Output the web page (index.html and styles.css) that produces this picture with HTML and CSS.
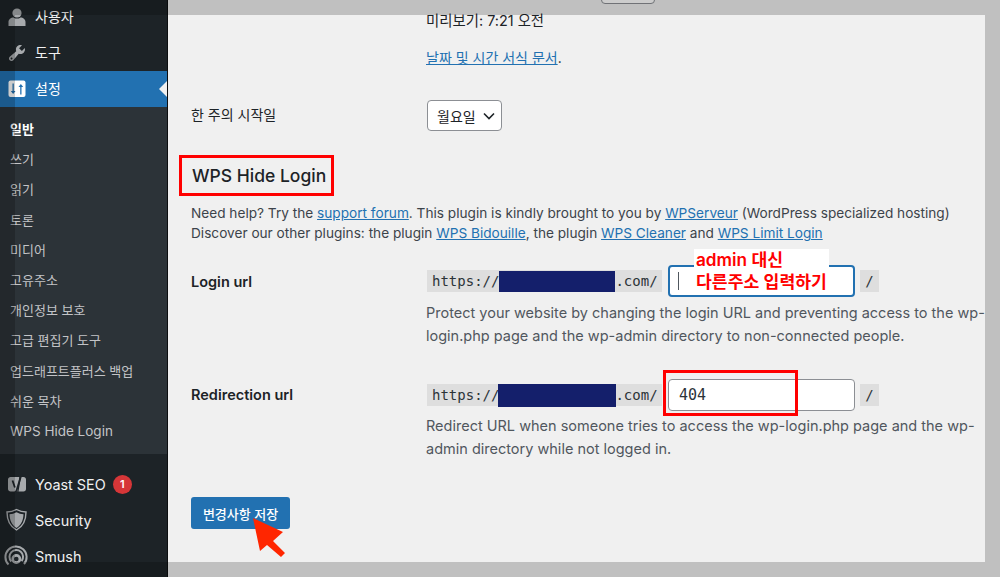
FILE: index.html
```html
<!DOCTYPE html>
<html lang="ko">

<head>
    <meta charset="UTF-8">
    <meta name="viewport" content="width=device-width, initial-scale=1.0">
    <title>일반 설정</title>
    <link rel="stylesheet" href="styles.css">
</head>

<body>
    <div class="app">
        <aside class="sidebar">
            <a class="menu-item menu-first">
                <svg class="menu-icon" viewBox="0 0 20 20"><circle cx="10" cy="6" r="4.6"/><path d="M1.5 19v-4c0-2.8 2.4-4.6 5-4.6 1 .8 2.2 1.2 3.5 1.2s2.500-.4 3.500-1.200c2.600 0 5 1.800 5 4.600v4z"/></svg>
                <span class="menu-label">사용자</span>
            </a>
            <a class="menu-item">
                <svg class="menu-icon" viewBox="0 0 20 20"><path d="M16.68 9.77c-1.34 1.34-3.3 1.67-4.95.99l-5.41 6.52c-.99.99-2.59.99-3.58 0s-.99-2.59 0-3.58l6.52-5.41c-.68-1.65-.35-3.61.99-4.95 1.28-1.28 3.12-1.62 4.72-1.06l-2.89 2.89 2.82 2.82 2.86-2.87c.53 1.58.18 3.39-1.08 4.65zM3.81 16.21c.4.39 1.04.39 1.43 0 .4-.4.4-1.04 0-1.43-.39-.4-1.03-.4-1.43 0-.39.39-.39 1.03 0 1.43z"/></svg>
                <span class="menu-label">도구</span>
            </a>
            <a class="menu-item menu-current">
                <svg class="menu-icon" viewBox="0 0 20 20"><rect x="1.500" y="1.500" width="17" height="16.500" rx="2" fill="#fff"/><path class="settings-arrows" d="M5.500 4.500h1.300v7.500h1.700l-2.350 3-2.350-3h1.700zM13.200 15.500h1.300V8h1.700l-2.350-3-2.350 3h1.700z"/></svg>
                <span class="menu-label">설정</span>
            </a>
            <nav class="submenu">
                <a class="submenu-item submenu-current">일반</a>
                <a class="submenu-item">쓰기</a>
                <a class="submenu-item">읽기</a>
                <a class="submenu-item">토론</a>
                <a class="submenu-item">미디어</a>
                <a class="submenu-item">고유주소</a>
                <a class="submenu-item">개인정보 보호</a>
                <a class="submenu-item">고급 편집기 도구</a>
                <a class="submenu-item">업드래프트플러스 백업</a>
                <a class="submenu-item">쉬운 목차</a>
                <a class="submenu-item submenu-latin">WPS Hide Login</a>
            </nav>
            <a class="menu-item menu-after">
                <svg class="menu-icon" viewBox="0 0 20 20"><path d="M3.500 3h8.800l-2 14.500H3.500C2.300 17.500 1 16.500 1 15V5.500C1 4 2.300 3 3.500 3zM14 3h2.500C18 3 19 4 19 5.500V15c0 1.500-1 2.500-2.500 2.500h-5z"/><path class="yoast-y" d="M5.500 6.500l2.400 7M14.500 .5L9.500 16.500c-.4 1.300-1.400 2.500-3.500 3"/></svg>
                <span class="menu-label menu-latin">Yoast SEO</span>
                <span class="badge">1</span>
            </a>
            <a class="menu-item">
                <svg class="menu-icon menu-icon-wide" viewBox="0 0 24 24"><path class="shield-line" d="M12.500 1.500c3.100 1.700 6.200 2.500 9.500 2.500 0 7.500-2 14-9.500 18C5 18 3 11.500 3 4c3.300 0 6.400-.8 9.500-2.500z"/><path d="M12.500 4.200c2.300 1.200 4.600 1.900 7 2.100-.2 5.500-2 10.500-7 13.700-5-3.200-6.800-8.200-7-13.700 2.400-.2 4.700-.9 7-2.100z"/></svg>
                <span class="menu-label menu-latin">Security</span>
            </a>
            <a class="menu-item">
                <svg class="menu-icon menu-icon-wide" viewBox="0 0 24 24"><g class="smush-arcs"><path d="M4.500 20.500a10.600 10.600 0 1 1 15.500-.5"/><path d="M7.300 17.500a6.800 6.800 0 1 1 10.300-.4"/></g><circle class="smush-dot" cx="12.300" cy="15" r="3.600"/></svg>
                <span class="menu-label menu-latin">Smush</span>
            </a>
        </aside>

        <main class="content">
            <div class="select-stub"></div>

            <div class="form-row form-row-first">
                <div></div>
                <div>
                    <p class="preview">미리보기: 7:21 오전</p>
                    <p class="doc-link"><a href="#">날짜 및 시간 서식 문서</a>.</p>
                </div>
            </div>

            <div class="form-row form-row-week">
                <label class="row-label">한 주의 시작일</label>
                <div class="fake-select">월요일
                    <svg class="select-chevron" viewBox="0 0 14 14"><path d="M2 4.500l5 5 5-5"/></svg>
                </div>
            </div>

            <h2 class="section-title">WPS Hide Login</h2>
            <p class="help-text">Need help? Try the <a href="#">support forum</a>. This plugin is kindly brought to you by <a href="#">WPServeur</a> (WordPress specialized hosting)<br>Discover our other plugins: the plugin <a href="#">WPS Bidouille</a>, the plugin <a href="#">WPS Cleaner</a> and <a href="#">WPS Limit Login</a></p>

            <div class="form-row form-row-login">
                <label class="row-label-strong">Login url</label>
                <div>
                    <div class="url-line">
                        <code class="url-chip">https://<span class="redact"></span>.com/</code>
                        <div class="input-wrap">
                            <input class="url-input url-input-focus" type="text">
                            <span class="caret"></span>
                            <div class="note">admin 대신<br>다른주소 입력하기</div>
                        </div>
                        <code class="slash-chip">/</code>
                    </div>
                    <p class="description">Protect your website by changing the login URL and preventing access to the wp-<br>login.php page and the wp-admin directory to non-connected people.</p>
                </div>
            </div>

            <div class="form-row form-row-redirect">
                <label class="row-label-strong">Redirection url</label>
                <div>
                    <div class="url-line">
                        <code class="url-chip">https://<span class="redact redact-wide"></span>.com/</code>
                        <div class="input-wrap">
                            <input class="url-input" type="text" value="404">
                            <div class="red-box"></div>
                        </div>
                        <code class="slash-chip">/</code>
                    </div>
                    <p class="description description-tight">Redirect URL when someone tries to access the wp-login.php page and the wp-<br>admin directory while not logged in.</p>
                </div>
            </div>

            <div class="submit-wrap">
                <button class="save-button" type="button">변경사항 저장</button>
                <svg class="red-arrow" viewBox="0 0 36 42"><path d="M1 1l30 14-10 9 12 12-4 4-14-12-7 6z"/></svg>
            </div>
        </main>
    </div>

    <div class="screen-frame"></div>
</body>
</html>
```

FILE: styles.css
```css
* {
    margin: 0;
    padding: 0;
    box-sizing: border-box;
}

html,
body {
    height: 577px;
    overflow: hidden;
}

body {
    position: relative;
    background-color: #f0f0f0;
    font-family: Inter, "Noto Sans CJK KR", sans-serif;
    font-size: 14px;
    color: #1d2327;
}

a {
    color: #2271b1;
}

.app {
    display: flex;
    height: 577px;
    overflow: hidden;
}

.screen-frame {
    position: absolute;
    inset: 0;
    border: 15px solid rgba(0, 0, 0, 0.2);
    pointer-events: none;
}

/* sidebar */
.sidebar {
    flex: 0 0 168px;
    background-color: #1d2327;
    border-right: 1px solid #0c0e10;
    overflow: hidden;
}

.menu-item {
    position: relative;
    display: flex;
    align-items: center;
    gap: 8px;
    height: 36px;
    padding-left: 7px;
    color: #f0f0f1;
    font-size: 14px;
}

.menu-first {
    margin-top: -1px;
}

.menu-label {
    padding-bottom: 2px;
}

.menu-latin {
    padding-bottom: 0;
    font-size: 14.4px;
}

.menu-current {
    background-color: #2271b1;
    color: #fff;
}

.menu-current::after {
    content: "";
    position: absolute;
    right: 0;
    top: 10px;
    border: 8px solid transparent;
    border-right-color: #f0f0f0;
    border-left-width: 0;
}

.menu-after {
    margin-top: 12px;
}

.menu-icon {
    flex: 0 0 20px;
    width: 20px;
    height: 20px;
    fill: #a7aaad;
}

.menu-icon-wide {
    flex: 0 0 24px;
    width: 24px;
    height: 24px;
    margin: 0 -1px 0 -3px;
}

.settings-arrows {
    fill: #2271b1;
}

.yoast-y {
    fill: none;
    stroke: #1d2327;
    stroke-width: 1.800;
}

.shield-line {
    fill: none;
    stroke: #a7aaad;
    stroke-width: 1.400;
}

.smush-arcs {
    fill: none;
    stroke: #a7aaad;
    stroke-width: 2;
}

.smush-dot {
    fill: none;
    stroke: #a7aaad;
    stroke-width: 2.600;
}

.badge {
    display: flex;
    align-items: center;
    justify-content: center;
    width: 19px;
    height: 19px;
    margin-left: -1px;
    border-radius: 50%;
    background-color: #d63638;
    color: #fff;
    font-size: 11px;
    font-weight: 600;
}

.submenu {
    padding: 7px 0 8px;
    background-color: #2c3338;
}

.submenu-item {
    display: block;
    height: 30.2px;
    padding-left: 10px;
    line-height: 30px;
    font-size: 13px;
    color: #c3c4c7;
}

.submenu-latin {
    font-size: 13.5px;
}

.submenu-current {
    color: #fff;
    font-weight: 600;
}

/* main area */
.content {
    flex: 1;
    min-width: 0;
    padding-left: 23px;
    color: #1d2327;
}

.select-stub {
    width: 54px;
    height: 34px;
    margin: -30px 0 0 410px;
    background-color: #fff;
    border: 1px solid #8c8f94;
    border-radius: 4px;
}

.form-row {
    display: grid;
    grid-template-columns: 235px 1fr;
}

.form-row-first {
    margin-top: 6px;
}

.preview {
    font-size: 14.4px;
    line-height: 21px;
}

.doc-link {
    margin-top: 16px;
    line-height: 21px;
}

.form-row-week {
    align-items: center;
    margin-top: 32px;
}

.row-label {
    padding-bottom: 4px;
    font-size: 14px;
}

.row-label-strong {
    font-size: 14.5px;
    font-weight: 600;
    line-height: 32px;
}

.form-row-login .row-label-strong {
    padding-top: 1px;
}

.fake-select {
    display: flex;
    align-items: center;
    gap: 6px;
    width: 75px;
    height: 31px;
    margin-left: 1px;
    padding-left: 9px;
    background-color: #fff;
    border: 1px solid #8c8f94;
    border-radius: 4px;
}

.select-chevron {
    width: 14px;
    height: 14px;
    fill: none;
    stroke: #1d2327;
    stroke-width: 1.600;
}

.section-title {
    display: block;
    width: 155px;
    height: 41px;
    margin: 24px 0 0 -12px;
    padding-left: 10px;
    border: 3px solid #ff0000;
    font-size: 17.5px;
    font-weight: 500;
    line-height: 36px;
    color: #1d2327;
    white-space: nowrap;
}

.help-text {
    margin-top: 7px;
    font-size: 13.65px;
    line-height: 20px;
    color: #3c434a;
    white-space: nowrap;
}

.form-row-login {
    margin-top: 22px;
}

.form-row-redirect {
    margin-top: 32px;
}

.url-line {
    display: flex;
    align-items: center;
    margin-left: 1px;
    height: 32px;
}

.url-chip,
.slash-chip {
    display: flex;
    align-items: center;
    height: 22px;
    background-color: #dedede;
    font-family: "DejaVu Sans Mono", monospace;
    font-size: 14px;
    color: #2c3338;
}

.url-chip {
    width: 235px;
    padding-left: 5px;
}

.slash-chip {
    justify-content: center;
    width: 19px;
    margin-left: 5px;
}

.redact {
    flex: 0 0 116px;
    height: 21px;
    background-color: #141f6b;
}

.redact-wide {
    flex-basis: 118px;
    height: 23px;
    margin-left: -1px;
    margin-right: -1px;
}

.input-wrap {
    position: relative;
    width: 187px;
    height: 32px;
    margin-left: 6px;
}

.url-input {
    width: 100%;
    height: 100%;
    padding-left: 10px;
    background-color: #fff;
    border: 1px solid #8c8f94;
    border-radius: 4px;
    font-family: "DejaVu Sans Mono", monospace;
    font-size: 15px;
    color: #2c3338;
    outline: none;
}

.url-input-focus {
    border: 2px solid #2271b1;
}

.caret {
    position: absolute;
    left: 10px;
    top: 7px;
    width: 1px;
    height: 18px;
    background-color: #50575e;
}

.note {
    position: absolute;
    left: 26px;
    top: -16px;
    width: 135px;
    height: 46px;
    padding-left: 2px;
    background-color: #fff;
    color: #ff0000;
    font-size: 17.2px;
    font-weight: 600;
    line-height: 22px;
    white-space: nowrap;
}

.red-box {
    position: absolute;
    left: -5px;
    top: -9px;
    width: 135px;
    height: 46px;
    border: 3px solid #ff0000;
}

.description {
    margin-top: 4px;
    font-size: 14.5px;
    line-height: 23px;
    color: #50575e;
    white-space: nowrap;
}

.description-tight {
    margin-top: 3px;
}

.submit-wrap {
    position: relative;
    margin-top: 37px;
}

.save-button {
    display: block;
    width: 99px;
    height: 32px;
    background-color: #2271b1;
    border: none;
    border-radius: 3px;
    font-family: inherit;
    font-size: 13px;
    font-weight: 500;
    color: #fff;
}

.red-arrow {
    position: absolute;
    left: 61px;
    top: 20px;
    width: 36px;
    height: 42px;
    fill: #ff2600;
}
```
